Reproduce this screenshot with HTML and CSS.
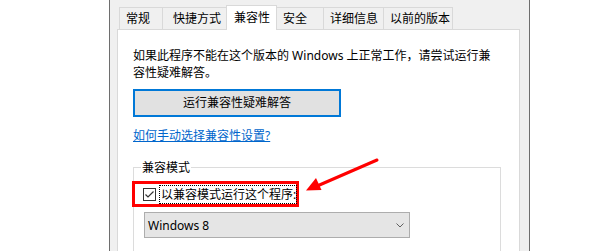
FILE: index.html
```html
<!DOCTYPE html>
<html lang="zh-CN">
<head>
<meta charset="utf-8">
<title>兼容性</title>
<link rel="stylesheet" href="styles.css">
</head>
<body>
<div class="window">
  <div class="tabs">
    <div class="tab w1">常规</div>
    <div class="tab w2">快捷方式</div>
    <div class="tab w3 active">兼容性</div>
    <div class="tab w4">安全</div>
    <div class="tab w5">详细信息</div>
    <div class="tab w6">以前的版本</div>
  </div>
  <div class="panel">
    <p class="intro">如果此程序不能在这个版本的 Windows 上正常工作，请尝试运行兼容性疑难解答。</p>
    <div class="btn">运行兼容性疑难解答</div>
    <a class="link" href="#">如何手动选择兼容性设置?</a>
    <div class="group">
      <div class="legend">兼容模式</div>
      <div class="check-row">
        <span class="checkbox">
          <svg width="11" height="11" viewBox="0 0 11 11"><polyline points="1.5,5.5 4,8 9.5,2.5" fill="none" stroke="#333" stroke-width="1.2"/></svg>
        </span>
        <span class="check-label">以兼容模式运行这个程序:</span>
      </div>
      <div class="select">
        <span>Windows 8</span>
        <svg width="8" height="5" viewBox="0 0 8 5"><polyline points="0.5,0.5 4,4 7.5,0.5" fill="none" stroke="#606060" stroke-width="1"/></svg>
      </div>
    </div>
  </div>
</div>
<svg class="arrow" width="90" height="50" viewBox="300 150 90 50">
  <line x1="377" y1="160" x2="316" y2="186.5" stroke="#f00" stroke-width="3" stroke-linecap="round"/>
  <polygon points="306,190.5 316,178 321.5,190" fill="#f00"/>
</svg>
</body>
</html>
```
FILE: styles.css
```css
html, body {
  margin: 0;
  padding: 0;
  background: #ffffff;
  overflow: hidden;
}
body {
  font-family: "Segoe UI", "Noto Sans", "Noto Sans CJK SC", sans-serif;
  font-size: 12px;
  color: #000;
  height: 251px;
}
.window {
  margin-left: 109px;
  width: 421px;
  height: 270px;
  box-sizing: border-box;
  border-left: 1px solid #6e6e6e;
  border-right: 1px solid #6e6e6e;
  background: #f0f0f0;
  padding: 5px 9px 0 7px;
}
.tabs {
  display: flex;
  align-items: flex-end;
  height: 24px;
  padding-left: 2px;
}
.tab {
  box-sizing: border-box;
  height: 22px;
  border: 1px solid #d9d9d9;
  border-bottom: none;
  margin-right: -1px;
  line-height: 20px;
  padding-left: 6px;
  white-space: nowrap;
  font-family: "Noto Sans CJK SC", sans-serif;
}
.tab.active {
  height: 25px;
  background: #fff;
  margin-bottom: -1px;
  line-height: 22px;
  position: relative;
  z-index: 1;
  padding-left: 7px;
}
.w1 { width: 44px; }
.w2 { width: 65px; padding-left: 10px; }
.w3 { width: 51px; }
.w4 { width: 48px; }
.w5 { width: 61px; }
.w6 { width: 70px; }
.panel {
  box-sizing: border-box;
  width: 403px;
  height: 260px;
  background: #fff;
  border: 1px solid #d9d9d9;
  padding: 0 18px 0 15px;
}
.intro {
  margin: 17px 0 0;
  line-height: 17px;
}
.btn {
  margin-top: 8px;
  box-sizing: border-box;
  width: 208px;
  height: 28px;
  border: 2px solid #0078d7;
  background: #e1e1e1;
  text-align: center;
  line-height: 24px;
}
.link {
  display: block;
  margin-top: 10px;
  line-height: 17px;
  color: #0066cc;
  text-decoration: underline;
  width: max-content;
}
.group {
  margin-top: 23px;
  border: 1px solid #dcdcdc;
  height: 120px;
}
.legend {
  display: table;
  margin: -9px 0 0 7px;
  padding: 0 1px;
  background: #fff;
  line-height: 17px;
}
.check-row {
  box-sizing: border-box;
  margin: 5px 0 0 -2px;
  width: 167px;
  height: 26px;
  border: 3px solid #f00;
  display: flex;
  align-items: center;
}
.checkbox {
  box-sizing: border-box;
  width: 13px;
  height: 13px;
  margin-left: 8px;
  border: 1px solid #333;
  display: flex;
  flex: none;
}
.check-label {
  margin-left: 3px;
  border: 1px dotted #000;
  padding: 0 0 0 1px;
  line-height: 17px;
  white-space: nowrap;
}
.select {
  box-sizing: border-box;
  margin: 5px 0 0 10px;
  width: 266px;
  height: 26px;
  border: 1px solid #adadad;
  background: #e5e5e5;
  display: flex;
  align-items: center;
  justify-content: space-between;
  padding: 0 5px 0 3px;
}
.arrow {
  position: absolute;
  left: 300px;
  top: 150px;
}
```
